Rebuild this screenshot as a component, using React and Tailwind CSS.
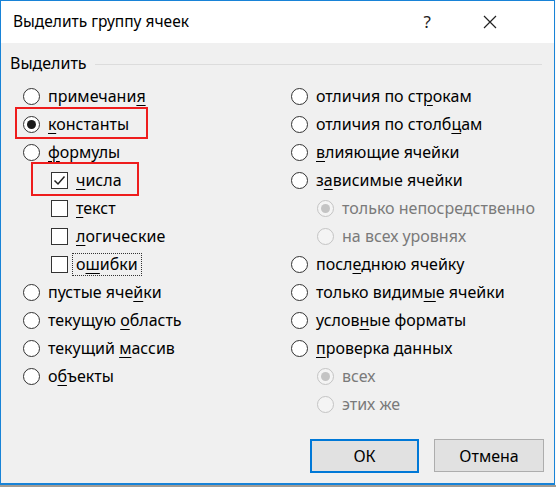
import React from "react";

const font = { fontFamily: '"Noto Sans", "Open Sans", sans-serif' };

function Radio({ checked, disabled }) {
  return (
    <span className={`w-[17px] h-[17px] rounded-full border-[1.5px] flex items-center justify-center shrink-0 ${disabled ? "border-[#c4c4c4] bg-[#f4f4f4]" : "border-[#333333] bg-white"}`}>
      {checked && <span className={`w-[9px] h-[9px] rounded-full ${disabled ? "bg-[#c4c4c4]" : "bg-[#1a1a1a]"}`} />}
    </span>
  );
}

function Check({ checked }) {
  return (
    <span className="w-[17px] h-[17px] border-[1.5px] border-[#333333] bg-white flex items-center justify-center shrink-0">
      {checked && (
        <svg width="13" height="13" viewBox="0 0 13 13">
          <path d="M1.5 6.5 L5 10 L11.5 2.5" fill="none" stroke="#222" strokeWidth="1.5" />
        </svg>
      )}
    </span>
  );
}

function Label({ pre, u, post, disabled }) {
  return (
    <span className={`text-[16px] leading-none whitespace-nowrap ${disabled ? "text-[#7a7a7a]" : "text-black"}`}>
      {pre}
      {u && <u className="underline-offset-[3px]">{u}</u>}
      {post}
    </span>
  );
}

function Row({ kind = "radio", checked, disabled, indent = "", gap = "gap-[8px]", children, extra = "" }) {
  return (
    <div className={`h-[28px] flex items-center ${indent} ${gap} ${extra}`}>
      {kind === "radio" ? <Radio checked={checked} disabled={disabled} /> : <Check checked={checked} />}
      {children}
    </div>
  );
}

export default function App() {
  return (
    <div className="w-[556px] h-[487px] bg-[#fafafa] flex flex-col overflow-hidden" style={font}>
      <div className="w-[555px] h-[485px] border border-[#1883d7] border-b-2 flex flex-col bg-[#f0f0f0]">
        <div className="h-[42px] bg-white flex items-center shrink-0">
          <span className="ml-[12px] text-[15.5px] text-black">Выделить группу ячеек</span>
          <span className="ml-auto mr-[52px] text-[17px] text-[#222]">?</span>
          <svg className="mr-[57px]" width="14" height="14" viewBox="0 0 14 14">
            <path d="M1 1 L13 13 M13 1 L1 13" stroke="#222" strokeWidth="1.2" />
          </svg>
        </div>

        <div className="flex items-center mt-[12px] ml-[9px] mr-[12px] h-[16px]">
          <span className="text-[16px] text-black leading-none">Выделить</span>
          <div className="flex-1 h-px bg-[#dcdcdc] ml-[8px] mt-[2px]" />
        </div>

        <div className="flex mt-[11px]">
          <div className="w-[268px] pl-[22px] flex flex-col">
            <Row><Label pre="примечани" u="я" /></Row>
            <Row checked extra="relative">
              <span className="absolute left-[-8px] top-[-3px] w-[133px] h-[32px] border-2 border-[#ee1c1c]" />
              <Label u="к" post="онстанты" />
            </Row>
            <Row><Label u="ф" post="ормулы" /></Row>
            <Row kind="check" checked indent="pl-[28px]" extra="relative">
              <span className="absolute left-[8px] top-[-4px] w-[108px] h-[34px] border-2 border-[#ee1c1c]" />
              <Label u="ч" post="исла" />
            </Row>
            <Row kind="check" indent="pl-[28px]"><Label u="т" post="екст" /></Row>
            <Row kind="check" indent="pl-[28px]"><Label u="л" post="огические" /></Row>
            <Row kind="check" indent="pl-[28px]" gap="gap-[4px]">
              <span className="border border-dotted border-[#333] px-[3px] h-[23px] flex items-center">
                <Label pre="о" u="ш" post="ибки" />
              </span>
            </Row>
            <Row><Label pre="пустые яче" u="й" post="ки" /></Row>
            <Row><Label pre="текущую " u="о" post="бласть" /></Row>
            <Row><Label pre="текущий " u="м" post="ассив" /></Row>
            <Row><Label pre="о" u="б" post="ъекты" /></Row>
          </div>

          <div className="flex-1 pl-[22px] flex flex-col">
            <Row><Label pre="отличия по ст" u="р" post="окам" /></Row>
            <Row><Label pre="отличия по столб" u="ц" post="ам" /></Row>
            <Row><Label u="в" post="лияющие ячейки" /></Row>
            <Row><Label pre="з" u="а" post="висимые ячейки" /></Row>
            <Row checked disabled indent="pl-[26px]"><Label pre="только непосредственно" disabled /></Row>
            <Row disabled indent="pl-[26px]"><Label pre="на всех уровнях" disabled /></Row>
            <Row><Label pre="посл" u="е" post="днюю ячейку" /></Row>
            <Row><Label pre="только видим" u="ы" post="е ячейки" /></Row>
            <Row><Label pre="услов" u="н" post="ые форматы" /></Row>
            <Row><Label u="п" post="роверка данных" /></Row>
            <Row checked disabled indent="pl-[26px]"><Label pre="всех" disabled /></Row>
            <Row disabled indent="pl-[26px]"><Label pre="этих же" disabled /></Row>
          </div>
        </div>

        <div className="flex justify-end gap-[15px] mr-[10px] mt-auto mb-[10px]">
          <button className="w-[109px] h-[34px] bg-[#e1e1e1] border-2 border-[#0078d7] text-[16px] text-black">ОК</button>
          <button className="w-[110px] h-[33px] bg-[#e1e1e1] border border-[#adadad] text-[16px] text-black">Отмена</button>
        </div>
      </div>
      <div className="flex-1 bg-[#a39d94]" />
    </div>
  );
}
